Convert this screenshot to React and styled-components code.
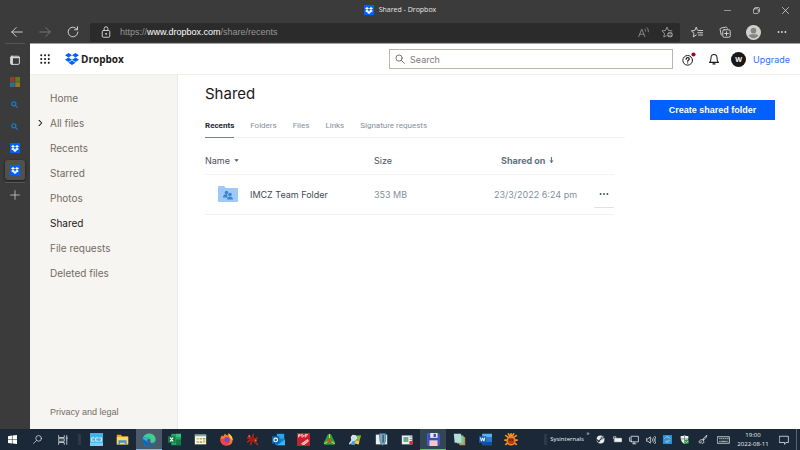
import React from "react";
import styled, { createGlobalStyle, css } from "styled-components";

const uiFont = '"Open Sans", "Noto Sans", sans-serif';
const webFont = 'Inter, Roboto, sans-serif';
const compactFont = '"Liberation Sans", Arial, sans-serif';

const GlobalStyle = createGlobalStyle`
  *, *::before, *::after { box-sizing: border-box; }
  body { margin: 0; background: #3b3b3b; font-family: ${webFont}; }
  button, input { font: inherit; color: inherit; margin: 0; }
  button { background: none; border: 0; padding: 0; cursor: pointer; }
  a { color: inherit; text-decoration: none; }
  svg { display: block; flex: none; }
`;

const Window = styled.div`
  display: grid;
  grid-template-rows: 20px 23px 1fr 21px;
  min-height: 100vh;
`;

const center = css`
  display: flex;
  align-items: center;
  justify-content: center;
`;

/* ---------- Browser frame ---------- */

const TitleBar = styled.header`
  display: grid;
  grid-template-columns: 1fr auto 1fr;
  align-items: center;
  background: #3b3b3b;
  color: #e8e8e8;
  font: 7px/20px ${uiFont};
`;

const PageTitle = styled.div`
  grid-column: 2;
  display: flex;
  align-items: center;
  gap: 5px;
`;

const WindowControls = styled.div`
  display: flex;
  justify-content: flex-end;
`;

const WindowButton = styled.button`
  ${center}
  width: 29px;
  height: 20px;
`;

const Toolbar = styled.div`
  display: flex;
  align-items: center;
  background: #3b3b3b;
  color: #dcdcdc;
  padding: 1px 4px 0 3px;
`;

const ToolButton = styled.button`
  ${center}
  width: ${(p) => p.$width || 28}px;
  height: 20px;
  opacity: ${(p) => (p.disabled ? 0.4 : 1)};
`;

const AddressBar = styled.div`
  flex: 1;
  display: flex;
  align-items: center;
  height: 19px;
  margin: 0 3px;
  padding: 0 2px 0 10px;
  border-radius: 2px;
  background: #2b2b2b;
`;

const Address = styled.a`
  flex: 1;
  margin-left: 8px;
  font: 9px/18px ${compactFont};
  color: #969696;
`;

const Domain = styled.span`
  color: #ffffff;
`;

const Viewport = styled.div`
  display: grid;
  grid-template-columns: 30px 1fr;
`;

const VerticalTabs = styled.nav`
  display: flex;
  flex-direction: column;
  align-items: center;
  gap: 2px;
  padding-right: 1px;
  background: #3b3b3b;
  color: #d6d6d6;
`;

const TabButton = styled.button`
  ${center}
  width: 20px;
  height: 20px;
  border-radius: 3px;
  background: ${(p) => (p.$active ? "#505050" : "transparent")};
  box-shadow: ${(p) => (p.$active ? "0 1px 3px #1b1b1b" : "none")};
`;

const TabDivider = styled.hr`
  width: 20px;
  margin: 0 0 ${(p) => p.$space || 0}px;
  border: 0;
  border-top: 1px solid #565656;
`;

const BrandTile = styled.span`
  ${center}
  width: 10px;
  height: 10px;
  background: #0061fe;
  color: #ffffff;
`;

/* ---------- Dropbox page ---------- */

const Site = styled.div`
  display: grid;
  grid-template-columns: 148px 1fr;
  grid-template-rows: 31px 1fr;
  border-top: 1px solid #a0a0a0;
  background: #ffffff;
  color: #1e1919;
`;

const SiteHeader = styled.header`
  grid-column: 1 / -1;
  display: flex;
  align-items: center;
  padding: 0 10px;
  border-bottom: 1px solid #f1efec;
`;

const IconButton = styled.button`
  ${center}
  width: ${(p) => p.$width || 25}px;
  height: 20px;
`;

const Brand = styled.a`
  display: flex;
  align-items: center;
  gap: 2px;
  margin-left: 15px;
  font: 700 10px/20px ${uiFont};
`;

const BrandMark = styled.span`
  color: #0061fe;
`;

const SearchBox = styled.label`
  display: flex;
  align-items: center;
  gap: 5px;
  width: 284px;
  height: 20px;
  margin-left: auto;
  margin-right: 3px;
  padding: 0 5px;
  border: 1px solid #bbb5ae;
  color: #736c64;
`;

const SearchInput = styled.input`
  flex: 1;
  min-width: 0;
  padding: 0;
  border: 0;
  outline: 0;
  background: none;
  font-size: 9px;
  &::placeholder { color: #817a73; opacity: 1; }
`;

const Avatar = styled.button`
  ${center}
  width: 15px;
  height: 15px;
  margin: 0 7px 0 5px;
  border-radius: 50%;
  background: #1a1716;
  color: #ffffff;
  font: 700 7px/15px ${uiFont};
`;

const Upgrade = styled.a`
  color: #2f72f5;
  font-size: 9px;
`;

const Sidebar = styled.aside`
  display: flex;
  flex-direction: column;
  padding: 10px 0 11px 8px;
  background: #f7f5f2;
  border-right: 1px solid #eeebe7;
  color: #736c64;
`;

const SideLink = styled.a`
  display: flex;
  align-items: center;
  height: 25px;
  font-size: 10px;
  color: ${(p) => (p.$active ? "#1e1919" : "inherit")};
`;

const Chevron = styled.span`
  width: 12px;
  color: #1e1919;
`;

const Legal = styled.a`
  margin-top: auto;
  padding-left: 12px;
  font: 9px/12px ${compactFont};
`;

const Main = styled.main`
  display: flex;
  align-items: flex-start;
  gap: 25px;
  padding: 10px 25px 0 27px;
`;

const Content = styled.section`
  flex: 1;
  min-width: 0;
`;

const Heading = styled.h1`
  margin: 0;
  font-size: 15px;
  font-weight: 400;
  line-height: 18px;
`;

const Tabs = styled.nav`
  display: flex;
  gap: 16px;
  margin-top: 12px;
  border-bottom: 1px solid #f0f1f2;
`;

const Tab = styled.a`
  margin-bottom: -1px;
  border-bottom: 1px solid ${(p) => (p.$active ? "#78828d" : "transparent")};
  font: ${(p) => (p.$active ? 700 : 400)} 8px/22px Roboto, sans-serif;
  color: ${(p) => (p.$active ? "#1b2733" : "#84909c")};
`;

const FileTable = styled.table`
  width: calc(100% - 11px);
  margin-top: 10px;
  border-collapse: collapse;
  table-layout: fixed;
  font-size: 9px;
`;

const HeadCell = styled.th`
  width: ${(p) => p.$width};
  height: 26px;
  padding: 0 0 0 ${(p) => p.$indent || 0}px;
  border-bottom: 1px solid #f3f4f5;
  text-align: left;
  font-weight: ${(p) => (p.$sorted ? 700 : 400)};
  color: ${(p) => (p.$sorted ? "#637282" : "#4a535d")};
`;

const SortButton = styled.button`
  display: flex;
  align-items: center;
  gap: 4px;
`;

const Cell = styled.td`
  height: 40px;
  padding: 0;
  border-bottom: 1px solid #f0f1f2;
  color: #84909c;
  white-space: nowrap;
`;

const FileLink = styled.a`
  display: flex;
  align-items: center;
  gap: 12px;
  padding-left: 13px;
  color: #434a52;
`;

const MoreButton = styled.button`
  ${center}
  width: 20px;
  height: 28px;
  border-bottom: 1px solid #dfe1e4;
  color: #3d4b60;
`;

const CreateButton = styled.button`
  width: 125px;
  height: 20px;
  margin-top: 15px;
  background: #0061fe;
  color: #ffffff;
  font: 700 9px/20px ${compactFont};
`;

/* ---------- Taskbar ---------- */

const Taskbar = styled.footer`
  display: flex;
  align-items: stretch;
  background: #1a2837;
  color: #f0f3f5;
  font: 6px/9px ${uiFont};
`;

const SystemButton = styled.button`
  ${center}
  width: ${(p) => p.$width || 25}px;
`;

const BarDivider = styled.span`
  width: 3px;
  margin: 5px 3px;
  background: #2c3a48;
`;

const Apps = styled.div`
  display: flex;
  flex: 0 1 440px;
`;

const AppButton = styled.button`
  ${center}
  flex: 1;
  background: ${(p) => p.$fill || "transparent"};
  box-shadow: ${(p) => (p.$marker ? `inset 0 -1px ${p.$marker}` : "none")};
`;

const Tray = styled.div`
  display: flex;
  align-items: stretch;
  margin-left: auto;
`;

const TrayLabel = styled.button`
  width: 34px;
  white-space: nowrap;
`;

const Overflow = styled.button`
  width: 8px;
  align-self: flex-start;
`;

const Clock = styled.time`
  width: 36px;
  padding-top: 2px;
  text-align: center;
`;

const DesktopEdge = styled.button`
  width: 4px;
  border-left: 1px solid #5a6570;
`;

/* ---------- Icons ---------- */

const Svg = ({ w = 12, h = w, box = "0 0 16 16", stroke = 1.2, children }) => (
  <svg width={w} height={h} viewBox={box} fill="none" stroke="currentColor" strokeWidth={stroke}
    strokeLinecap="round" strokeLinejoin="round" aria-hidden="true">{children}</svg>
);

const DropboxMark = ({ w = 13, h = w }) => (
  <svg width={w} height={h} viewBox="0 1.8 24 20.4" fill="currentColor" aria-hidden="true">
    <path d="M6 1.807 0 5.629l6 3.822 6-3.822zM18 1.807l-6 3.822 6 3.822 6-3.822zM0 13.274l6 3.822 6-3.822-6-3.822zM18 9.452l-6 3.822 6 3.822 6-3.822zM6 18.371l6 3.822 6-3.822-6-3.822z" />
  </svg>
);

const BrandIcon = () => <BrandTile><DropboxMark w={8} h={7} /></BrandTile>;

const EdgeSearch = () => (
  <Svg w={7} stroke={2.8}><g stroke="#1a7cc4"><circle cx="6.5" cy="6.5" r="4.7" /><path d="m10.500 10.500 4 4" /></g></Svg>
);

const appIcons = [
  ["Console", <Svg w={13}><path d="M0 0h16v16H0z" fill="#3fb4ea" stroke="none" /><path d="M0 12h16v4H0z" fill="#7fcdf1" stroke="none" /><path d="M5 6H2v4h3M10 6H7v4h3M12 6h2v4h-2" stroke="#d9f2fd" strokeWidth="1.2" /></Svg>],
  ["File Explorer", <Svg w={13}><g stroke="none"><path d="M1 2h5l1.500 2H15v10H1z" fill="#e9a823" /><path d="M1 5h14v9H1z" fill="#ffd766" /><path d="M3 9h10v5h-2v-2H5v2H3z" fill="#3f95d5" /></g></Svg>],
  ["Microsoft Edge", <Svg w={14}><g stroke="none"><circle cx="8" cy="8" r="7.5" fill="#1688d4" /><path d="M.8 6.500C2 2.500 5 .5 8 .5c4.500 0 7.500 3 7.500 6.500 0 2.500-2 4-4.500 4-2 0-2.500-1-2-2C10 6 5 3 .8 6.500" fill="#43cf8a" /><path d="M.5 8C2 4 7 4 9 7c-3-1-4 2-3 4s4 4 7.500 2C11 16 7 16 4 14 1.500 12.500.5 10 .5 8" fill="#0f65b8" /><path d="M.7 7C3 3.500 8 4 9.300 7.500 7 6 5 8 5 10 3 7 1.500 7 .7 7" fill="#2bb5dc" /><path d="M9.500 7.500c1 2-1 3 1 4 1.500.6 3 .3 4-.3l-1 2C10 15 6 13 6 10c0-2 2-3.500 3.500-2.500" fill="#4b5a68" /></g></Svg>, "#4b5a68", "#76b9ed"],
  ["Excel", <Svg w={13}><g stroke="none"><path d="M4 1h12v14H4z" fill="#21a366" /><path d="M10 8h6v7h-6z" fill="#107c41" /><path d="M10 1h6v4h-6z" fill="#33c481" /><path d="M0 4h9v8H0z" fill="#107c41" /></g><path d="m3 6 3 4m0-4-3 4" stroke="#fff" strokeWidth="1.5" /></Svg>],
  ["Calendar", <Svg w={13}><g stroke="none"><path d="M1 2h14v12H1z" fill="#f6f7f0" /><path d="M1 2h14v2H1z" fill="#7ba6cc" /><path d="M3 6h3v2H3zM11 9h3v3h-3z" fill="#e3c340" /><path d="M7 6h3v2H7zM3 10h3v2H3z" fill="#d9a53c" /><path d="M11 6h3v2h-3zM7 10h3v2H7z" fill="#84a96c" /></g></Svg>],
  ["Firefox", <Svg w={13}><g stroke="none"><path d="M2 3l2 1 2-3 3 2 2-2c3 2 4.500 4 4.500 7.500C15.500 13 12 15.500 8 15.500S.5 12.500.5 8.500C.5 6 1 4.500 2 3" fill="#ff7b22" /><path d="M10 0c2 2 6 4 5.500 9l-3-3z" fill="#ffdb3e" /><circle cx="8.5" cy="8.5" r="3.5" fill="#8045c3" /><path d="M1 8c2-2 4 0 5-1-1 3-1 3 2 4 2 1 4 0 5-1-1 3-3 5-6 5-4 0-6-3-6-7" fill="#f43e55" /></g></Svg>],
  ["Red utility", <Svg w={13}><path d="M2 6 6 7 4 3M8 6l1-4M10 8l4-2M10 10l4 4M7 10l-1 4M6 8l-4 3" stroke="#b3241b" strokeWidth="2" /><circle cx="8" cy="8" r="3" fill="#a51b17" stroke="none" /><path d="M3 3h2v2H3zM11 8h2v2h-2z" fill="#e98432" stroke="none" /></Svg>],
  ["Outlook", <Svg w={13}><g stroke="none"><path d="M6 1h9v10H6z" fill="#28a8ea" /><path d="M4 7h12v8H4z" fill="#0f78cf" /><path d="m6 15 10-7v7z" fill="#35b8f1" /><path d="M0 4h9v9H0z" fill="#0867b6" /></g><circle cx="4.5" cy="8.5" r="2.2" stroke="#fff" strokeWidth="1.4" /></Svg>],
  ["PDF editor", <Svg w={13}><path d="M0 0h16v16H0z" fill="#c6202e" stroke="none" /><path d="M2 5V2h2v1.500H2M6 2v3c3 0 3-3 0-3M10 5V2h3M10 3.500h2" stroke="#fff" strokeWidth=".9" /><path d="m6 13 7-5 1 2-5 4z" fill="#d8a5a8" stroke="#f2d4d5" /></Svg>],
  ["Green utility", <Svg w={13}><path d="M8 1c3 0 3 4 5 7s3 5 1 6-4 0-6 0-4 1-6 0-1-3 1-6 2-7 5-7" fill="#2ba33f" stroke="none" /><path d="m8 2v7l-6 4M8 9l6 4" stroke="#f5df42" strokeWidth="1.2" /><path d="M8 7v4M6 10h4" stroke="#d9452f" strokeWidth="2" /></Svg>],
  ["Windows tools", <Svg w={13}><g stroke="none"><path d="m4 2 5 1-1 5-6-1z" fill="#e88732" /><path d="m9 3 6 0-2 6-5-1z" fill="#82bd40" /><path d="m3 8 5 1-1 6-5-1z" fill="#45a1da" /><path d="m8 9 5 0-1 5-5-1z" fill="#f2ce4b" /></g><circle cx="6" cy="6" r="3.2" fill="#bfe2f5" stroke="#e8e8e8" /><path d="m4 9-3 4" stroke="#ddd" strokeWidth="2" /></Svg>],
  ["Document shield", <Svg w={13}><path d="M1 2h14v12H1z" fill="#e9eef1" stroke="none" /><path d="M6 1h7v7c0 4-2 6-3.500 7C8 14 6 12 6 8z" fill="#7fa9bf" stroke="#547d94" /><path d="M10 3v8" stroke="#33627c" strokeWidth="2" /></Svg>],
  ["Recorder", <Svg w={13}><path d="M1 3h13v11H1z" fill="#ecefeb" stroke="none" /><path d="M3 5h6v6H3z" fill="#6aa88d" stroke="none" /><path d="M11 5h2M11 8h2" stroke="#829590" /><circle cx="12.500" cy="12" r="2.5" fill="#d33434" stroke="none" /></Svg>],
  ["Disk commander", <Svg w={13}><path d="M1 1h13l1 1v13H1z" fill="#3553bf" stroke="#4b63d6" /><path d="M4 0h9v6H4z" fill="#f0e6f5" stroke="none" /><path d="M8 1h3v4H8z" fill="#3553bf" stroke="none" /><path d="M3 9h10v7H3z" fill="#f5c6ca" stroke="none" /></Svg>, "#344654", "#35e42c"],
  ["Notes", <Svg w={13}><path d="M6 5h9v10H8z" fill="#b9964b" stroke="none" /><path d="M4 3h9v10H5z" fill="#85c7a1" stroke="none" /><path d="M1 1h9v11H2z" fill="#b5ded9" stroke="none" /></Svg>],
  ["Word", <Svg w={13}><g stroke="none"><path d="M4 1h12v14H4z" fill="#2b7cd3" /><path d="M4 1h12v4H4z" fill="#55b3ef" /><path d="M4 11h12v4H4z" fill="#174c99" /><path d="M0 4h9v8H0z" fill="#185abd" /></g><path d="m2 6 1 4 1.500-4L6 10l1-4" stroke="#fff" /></Svg>],
  ["Beetle", <Svg w={14}><path d="M2 3l3 2M14 3l-3 2M1 8h3M15 8h-3M2 13l3-2M14 13l-3-2M5 1l2 3M11 1 9 4M8 1v3" stroke="#f39625" strokeWidth="2" /><circle cx="8" cy="9" r="4.500" fill="#b93a12" stroke="#f08a1e" strokeWidth="1.6" /><path d="M6 8h1M10 8h-1" stroke="#4e210d" strokeWidth="1.5" /></Svg>],
];

const trayIcons = [
  ["Steam", 17, <Svg w={9}><circle cx="8" cy="8" r="7" fill="#e9edf0" stroke="none" /><path d="m1 8 4 3 5-5M6 11l-3 2" stroke="#263544" strokeWidth="2" /><circle cx="11" cy="5" r="2" fill="#e9edf0" stroke="#263544" /></Svg>],
  ["Battery", 17, <Svg w={9}><path d="M3 6h12v6H3z" fill="#eef1f3" /><path d="M1 6V3h4v3" /></Svg>],
  ["Network", 16, <Svg w={10}><path d="M4 2h11v9H4zM8 11v3M6 14h5M1 4v6h3" /></Svg>],
  ["Volume", 17, <Svg w={10}><path d="M1 6v4h2l4 3V3L3 6zM10 6c1 1 1 3 0 4M12 4c2 2 2 6 0 8M14 2c3 3 3 9 0 12" /></Svg>],
  ["Sync", 16, <Svg w={9}><path d="M0 0h16v16H0z" fill="#2990de" stroke="none" /><path d="M3 6c2-4 6-3 8-1M12 10c-2 4-6 3-8 1" stroke="#91d6ff" strokeWidth="1.6" /><path d="m9 3 4 3M5 12l5-3" stroke="#edbd54" /></Svg>],
  ["Security", 18, <Svg w={9}><path d="M8 0c2 2 4 2 7 2 0 7-2 11-7 14C3 13 1 9 1 2c3 0 5 0 7-2" fill="#edf4ef" stroke="none" /><path d="M8 1v14M2 7h12" stroke="#536b70" /><circle cx="12" cy="12" r="4" fill="#2b9d43" stroke="none" /><path d="m10 12 1.500 1.500L14 11" stroke="#fff" /></Svg>],
  ["Pen", 19, <Svg w={10}><path d="M14 1c-3 1-6 5-6 7 2 0 6-4 6-7M8 8c-3-2-7 1-6 4 1 2 4 0 3-2M8 8c3 3 1 7-2 5" /></Svg>],
  ["Touch keyboard", 23, <Svg w={13} h={8} box="0 0 20 12"><path d="M1 1h18v10H1z" /><path d="M4 4h1M7 4h1M10 4h1M13 4h1M16 4h1M4 8h1M7 8h6M15 8h1" /></Svg>],
];

const sideLinks = ["Home", "All files", "Recents", "Starred", "Photos", "Shared", "File requests", "Deleted files"];
const tabs = ["Recents", "Folders", "Files", "Links", "Signature requests"];

const MoreDots = ({ w = 10 }) => (
  <Svg w={w}><g fill="currentColor" stroke="none"><circle cx="2.5" cy="8" r="1.5" /><circle cx="8" cy="8" r="1.5" /><circle cx="13.5" cy="8" r="1.5" /></g></Svg>
);

function BrowserChrome() {
  return (
    <>
      <TitleBar>
        <PageTitle><BrandIcon />Shared - Dropbox</PageTitle>
        <WindowControls>
          <WindowButton aria-label="Minimize"><Svg w={7}><path d="M1 8h14" /></Svg></WindowButton>
          <WindowButton aria-label="Restore"><Svg w={7} stroke={1.6}><rect x="1" y="4" width="11" height="11" rx="2" /><path d="M5 1h7c2 0 3 1 3 3v7" /></Svg></WindowButton>
          <WindowButton aria-label="Close"><Svg w={7} stroke={1.6}><path d="m1 1 14 14M15 1 1 15" /></Svg></WindowButton>
        </WindowControls>
      </TitleBar>
      <Toolbar>
        <ToolButton aria-label="Back"><Svg w={12}><path d="M15 8H1M7 2 1 8l6 6" /></Svg></ToolButton>
        <ToolButton aria-label="Forward" disabled><Svg w={12}><path d="M1 8h14M9 2l6 6-6 6" /></Svg></ToolButton>
        <ToolButton aria-label="Refresh"><Svg w={12}><path d="M13.500 4.500A6.500 6.500 0 1 0 14.500 8M14 1v4h-4" /></Svg></ToolButton>
        <AddressBar>
          <Svg w={12}><rect x="3" y="6" width="10" height="9" rx="1.5" /><path d="M5.500 6V3.500a2.500 2.500 0 0 1 5 0V6" /><circle cx="8" cy="10.5" r=".6" fill="currentColor" /></Svg>
          <Address href="#address">https://<Domain>www.dropbox.com</Domain>/share/recents</Address>
          <ToolButton $width={23} aria-label="Read aloud">
            <Svg w={11}><g stroke="#969696"><path d="m1 14 4.500-11L10 14M2.500 10.500h6M10 3c1 1 1 2 1 3M13 1c2 2 2 4 2 6" /></g></Svg>
          </ToolButton>
          <ToolButton $width={23} aria-label="Add favorite">
            <Svg w={12}><g stroke="#a0a0a0"><path d="M14.500 6.500 10 6 8 1.500 6 6l-4.700.5L4.700 10l-1 4.700L7 13" /><circle cx="12" cy="11.5" r="3.6" fill="#a0a0a0" stroke="none" /><path d="M12 9.500v4M10 11.500h4" stroke="#2b2b2b" /></g></Svg>
          </ToolButton>
        </AddressBar>
        <ToolButton aria-label="Favorites"><Svg w={12}><path d="M8.500 5.500 7 1.500l-2 4.500-4.500.5L4 9.700l-1 4.800L7 12M10 6h5.500M9 9h6.500M10 12h5.500" /></Svg></ToolButton>
        <ToolButton aria-label="Collections"><Svg w={12}><rect x="5" y="5" width="10" height="10" rx="2" /><path d="M3 12 1.500 5c-.3-1 .2-2 1.200-2.200L9 1.500c1 0 2 .5 2.200 1.500M10 7.500v5M7.500 10h5" /></Svg></ToolButton>
        <ToolButton $width={29} aria-label="Profile"><Svg w={15}><g stroke="none"><circle cx="8" cy="8" r="8" fill="#d0d0cd" /><circle cx="8" cy="6" r="3" fill="#858585" /><path d="M3 11c0-1.500 10-1.500 10 0-1 4-9 4-10 0" fill="#858585" /></g></Svg></ToolButton>
        <ToolButton aria-label="Settings and more"><MoreDots /></ToolButton>
      </Toolbar>
    </>
  );
}

function BrowserTabs() {
  return (
    <VerticalTabs aria-label="Open tabs">
      <TabDivider $space={4} />
      <TabButton aria-label="Tab actions"><Svg w={10} stroke={1.6}><rect x="1" y="2" width="14" height="13" rx="2" /><path d="M1 4h14" strokeWidth="2" /><path d="M3 3v11" strokeWidth="3.500" /></Svg></TabButton>
      <TabButton aria-label="Microsoft"><Svg w={10}><g stroke="none"><path d="M0 0h7.600v7.600H0z" fill="#923d2a" /><path d="M8.400 0H16v7.600H8.400z" fill="#597c20" /><path d="M0 8.400h7.600V16H0z" fill="#287097" /><path d="M8.400 8.400H16V16H8.400z" fill="#977322" /></g></Svg></TabButton>
      <TabButton aria-label="Search tab 1"><EdgeSearch /></TabButton>
      <TabButton aria-label="Search tab 2"><EdgeSearch /></TabButton>
      <TabButton aria-label="Dropbox"><BrandIcon /></TabButton>
      <TabButton aria-label="Shared - Dropbox" $active><BrandIcon /></TabButton>
      <TabDivider />
      <TabButton aria-label="New tab"><Svg w={10}><path d="M8 1v14M1 8h14" /></Svg></TabButton>
    </VerticalTabs>
  );
}

function DropboxHeader() {
  return (
    <SiteHeader>
      <IconButton $width={10} aria-label="Apps">
        <Svg w={10}><g fill="#1e1919" stroke="none">{[0.5, 6.5, 12.5].flatMap((y) => [0.5, 6.5, 12.5].map((x) => <rect key={`${x}-${y}`} x={x} y={y} width="3" height="3" rx="1" />))}</g></Svg>
      </IconButton>
      <Brand href="#home"><BrandMark><DropboxMark w={14} h={12} /></BrandMark>Dropbox</Brand>
      <SearchBox>
        <Svg w={10} stroke={1.5}><circle cx="6.5" cy="6.5" r="5" /><path d="m10.500 10.500 4.500 4.500" /></Svg>
        <SearchInput aria-label="Search" placeholder="Search" />
      </SearchBox>
      <IconButton aria-label="Help"><Svg w={15} box="0 0 18 18"><circle cx="8" cy="10" r="5.8" stroke="#1e1919" /><path d="M6.200 8.700c0-2.700 3.700-2.200 3.700-.3 0 1.500-1.900 1.300-1.900 2.600M8 13v.1" strokeWidth="1.5" /><circle cx="15" cy="3" r="2.5" fill="#a7002f" stroke="none" /></Svg></IconButton>
      <IconButton aria-label="Notifications"><Svg w={12} stroke={1.4}><path d="M2 12.500c1.500-1 2-3 2-6C4 3.500 5.500 2 8 2s4 1.500 4 4.500c0 3 .5 5 2 6zM6.500 14.500h3" /></Svg></IconButton>
      <Avatar aria-label="Account">W</Avatar>
      <Upgrade href="#upgrade">Upgrade</Upgrade>
    </SiteHeader>
  );
}

function SharedFiles() {
  return (
    <Main>
      <Content>
        <Heading>Shared</Heading>
        <Tabs>{tabs.map((name, i) => <Tab key={name} href={`#${i}`} $active={i === 0}>{name}</Tab>)}</Tabs>
        <FileTable>
          <thead>
            <tr>
              <HeadCell $width="169px"><SortButton>Name <Svg w={5}><path d="M1 4h14L8 12z" fill="currentColor" stroke="none" /></Svg></SortButton></HeadCell>
              <HeadCell $width="120px">Size</HeadCell>
              <HeadCell $indent={7} $sorted><SortButton>Shared on <Svg w={5} h={7} box="0 0 10 14" stroke={2.2}><path d="M5 1v10" /><path d="M1 7h8l-4 5z" fill="currentColor" stroke="none" /></Svg></SortButton></HeadCell>
              <HeadCell $width="20px" aria-label="Actions" />
            </tr>
          </thead>
          <tbody>
            <tr>
              <Cell><FileLink href="#folder"><Svg w={20} h={17} box="0 0 20 17"><g stroke="none"><path d="M0 1q0-1 1-1h5l2 2h11q1 0 1 1v12q0 1-1 1H1q-1 0-1-1z" fill="#a1c9f7" /><g fill="#3984d5"><circle cx="8.500" cy="6.500" r="1.800" /><path d="M5 11.500c0-2.500 1.500-3.500 4-3.500l.8 3.500z" /><circle cx="12" cy="8.500" r="1.800" /><path d="M9 13.500c0-4 6-4 6 0z" /></g></g></Svg>IMCZ Team Folder</FileLink></Cell>
              <Cell>353 MB</Cell>
              <Cell>23/3/2022 6:24 pm</Cell>
              <Cell><MoreButton aria-label="More"><MoreDots /></MoreButton></Cell>
            </tr>
          </tbody>
        </FileTable>
      </Content>
      <CreateButton>Create shared folder</CreateButton>
    </Main>
  );
}

function WindowsTaskbar() {
  return (
    <Taskbar>
      <SystemButton aria-label="Start"><Svg w={9}><path d="m0 2 7-1v6.500H0zM8 1l8-1v7.500H8zM0 8.500h7V15l-7-1zM8 8.500h8V16l-8-1z" fill="#fff" stroke="none" /></Svg></SystemButton>
      <SystemButton aria-label="Search"><Svg w={9}><circle cx="10" cy="6" r="5" /><path d="m6 10-5 5" /></Svg></SystemButton>
      <SystemButton aria-label="Task view"><Svg w={10}><path d="M1 1v3h9V1M1 15v-3h9v3M1 6h9v4H1zM14 1v14M13 5h2" /></Svg></SystemButton>
      <BarDivider />
      <Apps>{appIcons.map(([name, icon, fill, marker]) => <AppButton key={name} aria-label={name} $fill={fill} $marker={marker}>{icon}</AppButton>)}</Apps>
      <Tray>
        <BarDivider />
        <TrayLabel>Sysinternals</TrayLabel>
        <Overflow aria-label="More tools">»</Overflow>
        {trayIcons.map(([name, width, icon]) => <SystemButton key={name} $width={width} aria-label={name}>{icon}</SystemButton>)}
        <Clock>19:00<br />2022-08-11</Clock>
        <SystemButton aria-label="Notifications"><Svg w={10}><path d="M1 2h14v10h-4l-2 3v-3H1z" /></Svg></SystemButton>
        <DesktopEdge aria-label="Show desktop" />
      </Tray>
    </Taskbar>
  );
}

export default function App() {
  return (
    <Window>
      <GlobalStyle />
      <BrowserChrome />
      <Viewport>
        <BrowserTabs />
        <Site>
          <DropboxHeader />
          <Sidebar>
            {sideLinks.map((name) => (
              <SideLink key={name} href={`#${name}`} $active={name === "Shared"}>
                <Chevron>{name === "All files" && <Svg w={6} stroke={2.8}><path d="m3 1 7 7-7 7" /></Svg>}</Chevron>
                {name}
              </SideLink>
            ))}
            <Legal href="#legal">Privacy and legal</Legal>
          </Sidebar>
          <SharedFiles />
        </Site>
      </Viewport>
      <WindowsTaskbar />
    </Window>
  );
}
